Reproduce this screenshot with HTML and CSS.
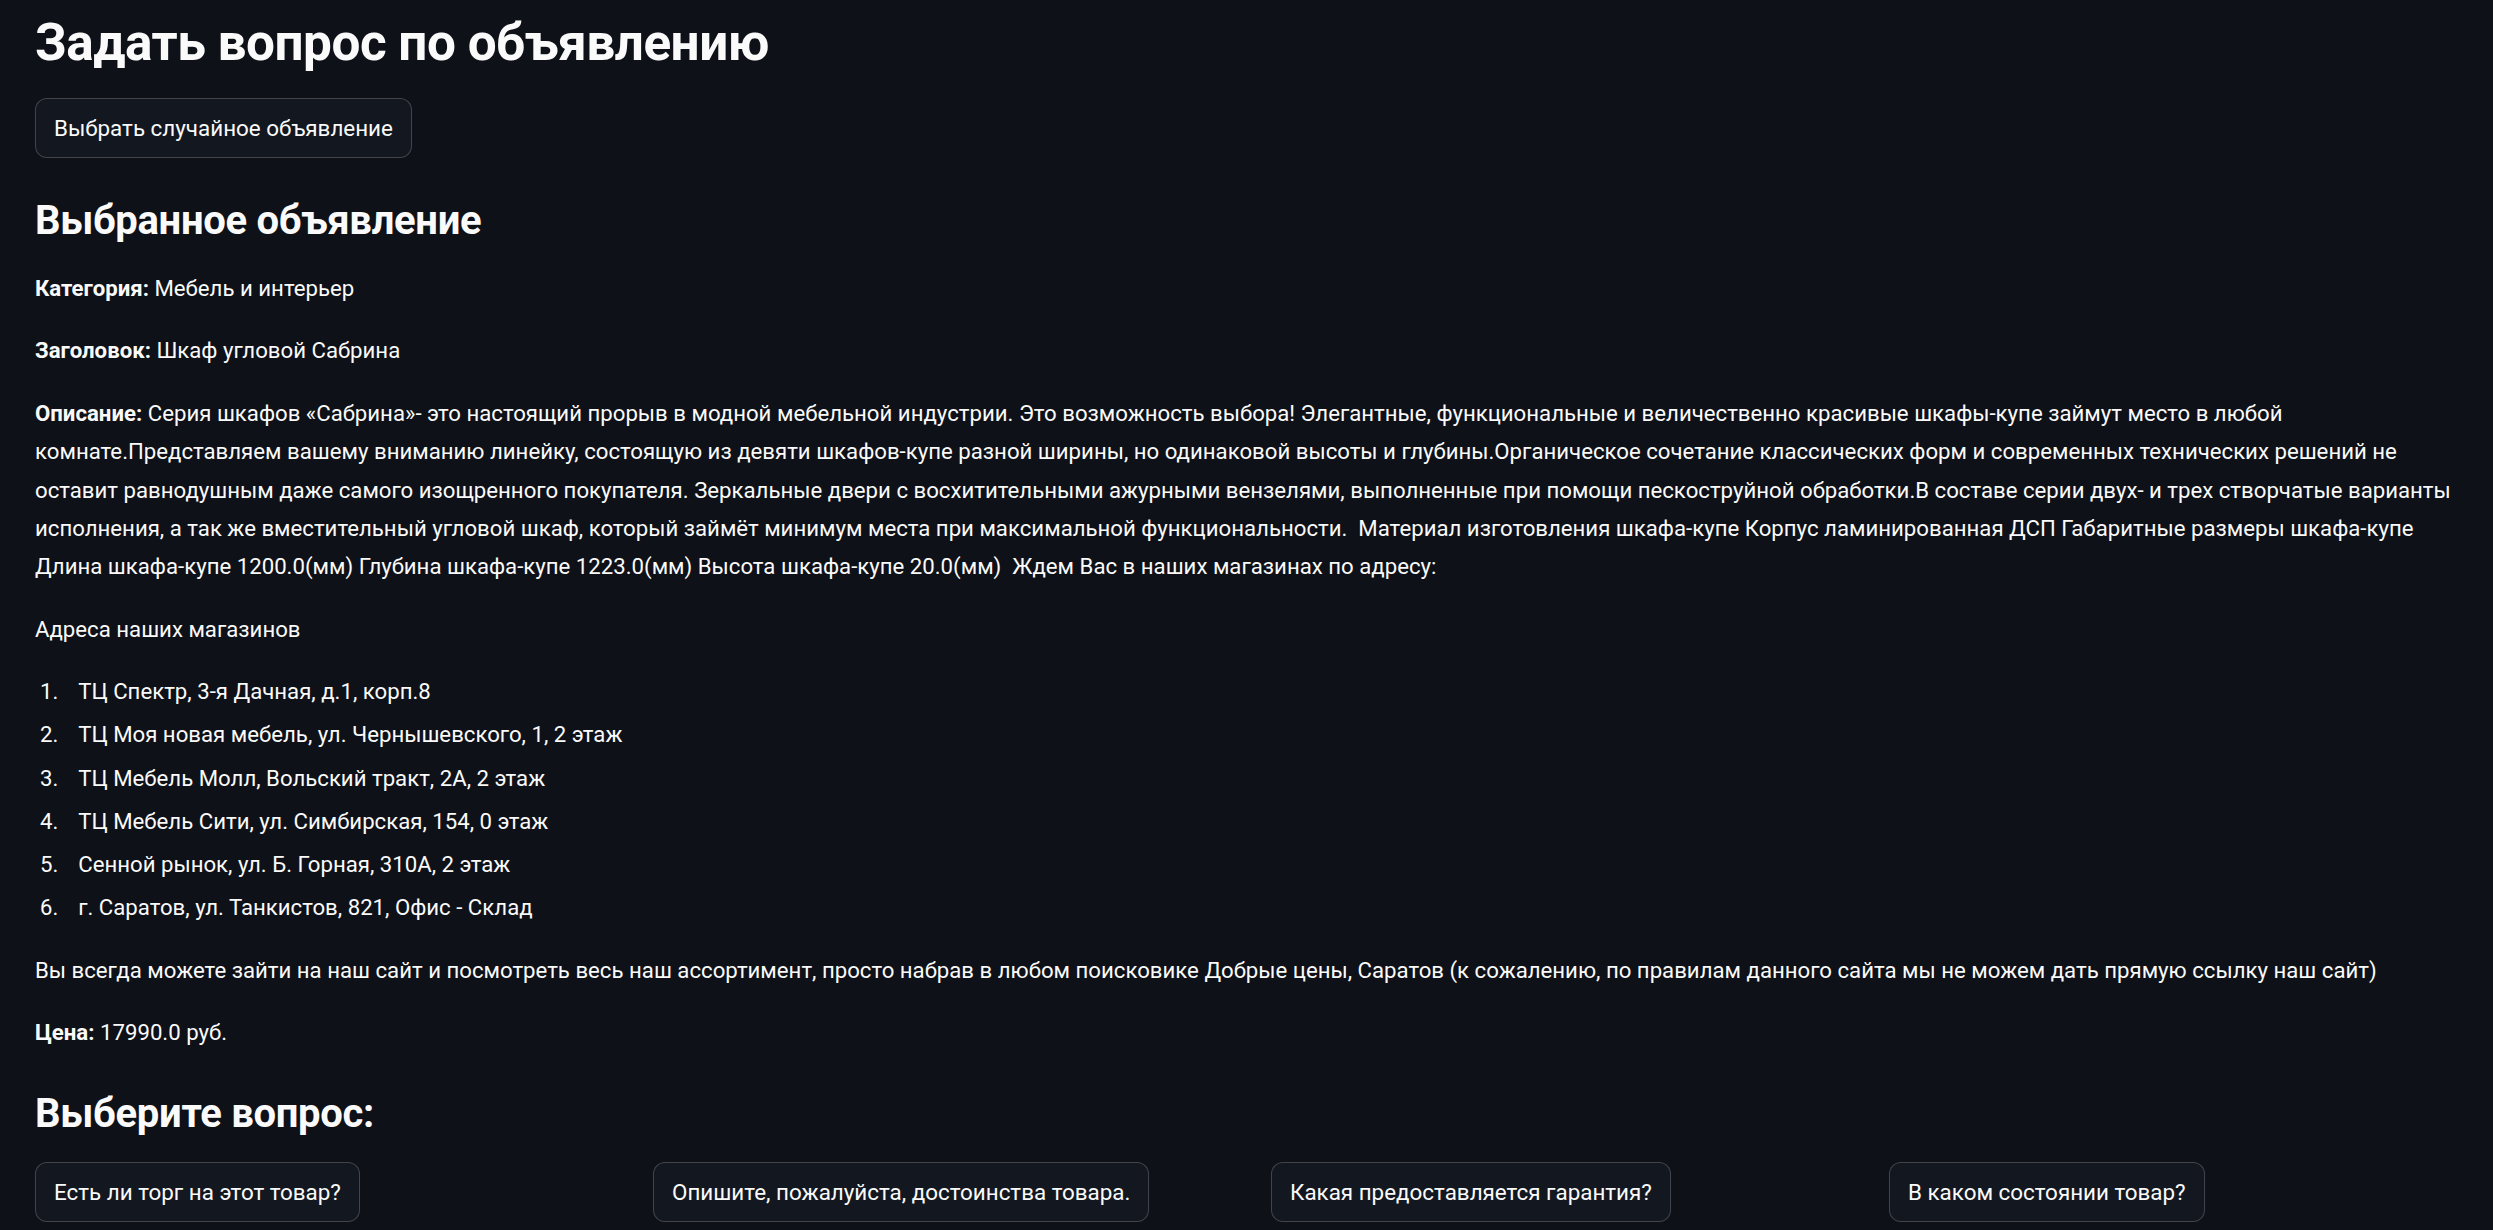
FILE: index.html
```html
<!DOCTYPE html>
<html lang="ru">
<head>
<meta charset="utf-8">
<title>Задать вопрос по объявлению</title>
<link rel="stylesheet" href="styles.css">
</head>
<body>
<main class="page">
  <h1 class="title">Задать вопрос по объявлению</h1>
  <div class="action-row">
    <button class="btn" type="button">Выбрать случайное объявление</button>
  </div>

  <h2 class="subtitle">Выбранное объявление</h2>
  <p class="text"><strong>Категория:</strong> Мебель и интерьер</p>
  <p class="text"><strong>Заголовок:</strong> Шкаф угловой Сабрина</p>
  <p class="text"><strong>Описание:</strong> Серия шкафов «Сабрина»- это настоящий прорыв в модной мебельной индустрии. Это возможность выбора! Элегантные, функциональные и величественно красивые шкафы-купе займут место в любой комнате.Представляем вашему вниманию линейку, состоящую из девяти шкафов-купе разной ширины, но одинаковой высоты и глубины.Органическое сочетание классических форм и современных технических решений не оставит равнодушным даже самого изощренного покупателя. Зеркальные двери с восхитительными ажурными вензелями, выполненные при помощи пескоструйной обработки.В составе серии двух- и трех створчатые варианты исполнения, а так же вместительный угловой шкаф, который займёт минимум места при максимальной функциональности.&nbsp; Материал изготовления шкафа-купе Корпус ламинированная ДСП Габаритные размеры шкафа-купе Длина шкафа-купе 1200.0(мм) Глубина шкафа-купе 1223.0(мм) Высота шкафа-купе 20.0(мм)&nbsp; Ждем Вас в наших магазинах по адресу:</p>
  <p class="text">Адреса наших магазинов</p>
  <ol class="list">
    <li>ТЦ Спектр, 3-я Дачная, д.1, корп.8</li>
    <li>ТЦ Моя новая мебель, ул. Чернышевского, 1, 2 этаж</li>
    <li>ТЦ Мебель Молл, Вольский тракт, 2А, 2 этаж</li>
    <li>ТЦ Мебель Сити, ул. Симбирская, 154, 0 этаж</li>
    <li>Сенной рынок, ул. Б. Горная, 310А, 2 этаж</li>
    <li>г. Саратов, ул. Танкистов, 821, Офис - Склад</li>
  </ol>
  <p class="text">Вы всегда можете зайти на наш сайт и посмотреть весь наш ассортимент, просто набрав в любом поисковике Добрые цены, Саратов (к сожалению, по правилам данного сайта мы не можем дать прямую ссылку наш сайт)</p>
  <p class="text"><strong>Цена:</strong> 17990.0 руб.</p>

  <h2 class="subtitle">Выберите вопрос:</h2>
  <div class="columns">
    <div class="col"><button class="btn" type="button">Есть ли торг на этот товар?</button></div>
    <div class="col"><button class="btn" type="button">Опишите, пожалуйста, достоинства товара.</button></div>
    <div class="col"><button class="btn" type="button">Какая предоставляется гарантия?</button></div>
    <div class="col"><button class="btn" type="button">В каком состоянии товар?</button></div>
  </div>
</main>
</body>
</html>
```

FILE: styles.css
```css
html, body {
  margin: 0;
  padding: 0;
  background: #0e1117;
}

body {
  color: #fafafa;
  font-family: Roboto, "Noto Sans", "Liberation Sans", sans-serif;
  font-size: 22.2px;
  line-height: 38.4px;
  overflow: hidden;
}

.page {
  padding: 11px 35px 0 35px;
  width: 2423px;
}

.title {
  margin: 0;
  font-size: 51.3px;
  line-height: 64px;
  font-weight: 700;
  letter-spacing: -0.5px;
}

.action-row {
  margin-top: 23px;
}

.btn {
  box-sizing: border-box;
  height: 60px;
  padding: 0 18px;
  border: 1px solid rgba(250, 250, 250, 0.2);
  border-radius: 12px;
  background: #13171f;
  color: #fafafa;
  font-family: inherit;
  font-size: 22.4px;
  line-height: 38.4px;
  cursor: pointer;
}

.subtitle {
  margin: 39px 0 24px 0;
  font-size: 40px;
  line-height: 48px;
  font-weight: 700;
  letter-spacing: -0.3px;
}

.text {
  margin: 0 0 24px 0;
}

.text strong {
  font-weight: 700;
}

.list {
  margin: 0 0 24px 0;
  padding: 0;
}

.list li {
  margin: 4.8px 0 4.8px 28.8px;
  padding-left: 14.4px;
}

.columns {
  display: grid;
  grid-template-columns: repeat(4, 1fr);
  column-gap: 49px;
}

.col {
  display: flex;
  align-items: flex-start;
}
```
